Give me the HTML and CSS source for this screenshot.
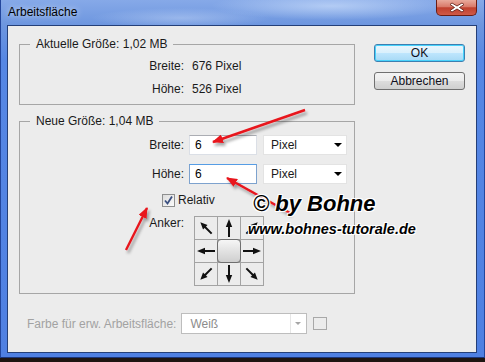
FILE: index.html
```html
<!DOCTYPE html>
<html>
<head>
    <title>Arbeitsfläche</title>
    <link rel="stylesheet" href="styles.css">
</head>
<body>
    <div class="window">
        <div class="titlebar">
            <span class="title">Arbeitsfläche</span>
            <div class="close-button">
                <svg width="16" height="11" viewBox="0 0 16 11">
                    <path d="M3 1 L8 4 L13 1 L15 2.5 L10.5 5.5 L15 8.5 L13 10 L8 7 L3 10 L1 8.5 L5.5 5.5 L1 2.5 Z" fill="#fff" stroke="#5a1810" stroke-width="0.8"/>
                </svg>
            </div>
        </div>

        <div class="client">
            <div class="main-column">
                <fieldset class="group group-current">
                    <legend>Aktuelle Größe: 1,02 MB</legend>
                    <div class="info-grid">
                        <span class="label">Breite:</span><span>676 Pixel</span>
                        <span class="label">Höhe:</span><span>526 Pixel</span>
                    </div>
                </fieldset>

                <fieldset class="group group-new">
                    <legend>Neue Größe: 1,04 MB</legend>
                    <div class="form-grid">
                        <label class="label" for="newWidth">Breite:</label>
                        <div class="field-row">
                            <input type="text" id="newWidth" class="text-input" value="6">
                            <div class="select">Pixel<span class="caret"></span></div>
                        </div>

                        <label class="label" for="newHeight">Höhe:</label>
                        <div class="field-row">
                            <input type="text" id="newHeight" class="text-input text-input-focus" value="6">
                            <div class="select">Pixel<span class="caret"></span></div>
                        </div>

                        <div class="check-row">
                            <span class="checkbox">
                                <svg width="11" height="11" viewBox="0 0 11 11">
                                    <path d="M2 5.5 L4.5 8.5 L9 1.5" fill="none" stroke="#3a4f80" stroke-width="1.8"/>
                                </svg>
                            </span>
                            <span>Relativ</span>
                        </div>

                        <span class="label anchor-label">Anker:</span>
                        <div class="anchor-grid">
                            <div class="anchor-cell">
                                <svg viewBox="0 0 22 22"><path d="M11 3 L14.2 10 L12 10 L12 19 L10 19 L10 10 L7.8 10 Z" transform="rotate(-45 11 11)"/></svg>
                            </div>
                            <div class="anchor-cell">
                                <svg viewBox="0 0 22 22"><path d="M11 2 L14.2 10 L12 10 L12 20 L10 20 L10 10 L7.8 10 Z"/></svg>
                            </div>
                            <div class="anchor-cell">
                                <svg viewBox="0 0 22 22"><path d="M11 3 L14.2 10 L12 10 L12 19 L10 19 L10 10 L7.8 10 Z" transform="rotate(45 11 11)"/></svg>
                            </div>
                            <div class="anchor-cell">
                                <svg viewBox="0 0 22 22"><path d="M11 2 L14.2 10 L12 10 L12 20 L10 20 L10 10 L7.8 10 Z" transform="rotate(-90 11 11)"/></svg>
                            </div>
                            <div class="anchor-cell">
                                <div class="anchor-center"></div>
                            </div>
                            <div class="anchor-cell">
                                <svg viewBox="0 0 22 22"><path d="M11 2 L14.2 10 L12 10 L12 20 L10 20 L10 10 L7.8 10 Z" transform="rotate(90 11 11)"/></svg>
                            </div>
                            <div class="anchor-cell">
                                <svg viewBox="0 0 22 22"><path d="M11 3 L14.2 10 L12 10 L12 19 L10 19 L10 10 L7.8 10 Z" transform="rotate(-135 11 11)"/></svg>
                            </div>
                            <div class="anchor-cell">
                                <svg viewBox="0 0 22 22"><path d="M11 2 L14.2 10 L12 10 L12 20 L10 20 L10 10 L7.8 10 Z" transform="rotate(180 11 11)"/></svg>
                            </div>
                            <div class="anchor-cell">
                                <svg viewBox="0 0 22 22"><path d="M11 3 L14.2 10 L12 10 L12 19 L10 19 L10 10 L7.8 10 Z" transform="rotate(135 11 11)"/></svg>
                            </div>
                        </div>
                    </div>
                </fieldset>

                <div class="color-row">
                    <span class="disabled-label">Farbe für erw. Arbeitsfläche:</span>
                    <div class="select select-disabled">
                        <span>Weiß</span>
                        <span class="select-button"><span class="caret"></span></span>
                    </div>
                    <span class="color-swatch"></span>
                </div>
            </div>

            <div class="button-column">
                <button class="button button-default">OK</button>
                <button class="button">Abbrechen</button>
            </div>
        </div>

        <!-- tutorial annotations drawn over the dialog -->
        <svg class="annotations" width="485" height="362">
            <defs>
                <marker id="head" markerWidth="11" markerHeight="9" refX="10" refY="4.5" orient="auto" markerUnits="userSpaceOnUse">
                    <path d="M0 0 L11 4.5 L0 9 Z" fill="#e8141c"/>
                </marker>
                <filter id="shadow" x="-20%" y="-20%" width="140%" height="140%">
                    <feDropShadow dx="2" dy="3" stdDeviation="1.6" flood-color="#000" flood-opacity="0.35"/>
                </filter>
            </defs>
            <g filter="url(#shadow)" stroke="#e8141c" stroke-width="2.4" marker-end="url(#head)">
                <line x1="305" y1="110" x2="213" y2="142"/>
                <line x1="290" y1="213" x2="227" y2="178"/>
                <line x1="126" y1="250" x2="147" y2="208"/>
            </g>
        </svg>
        <div class="watermark watermark-name">© by Bohne</div>
        <div class="watermark watermark-url">www.bohnes-tutorale.de</div>
    </div>
</body>
</html>
```

FILE: styles.css
```css
body {
    margin: 0;
    width: 485px;
    height: 362px;
    overflow: hidden;
    background-color: #1e1511;
    font-family: 'Liberation Sans', Arial, sans-serif;
    font-size: 12px;
    color: #1a1a1a;
}
.window {
    position: relative;
    display: flex;
    flex-direction: column;
    box-sizing: border-box;
    width: 485px;
    height: 358px;
    padding: 0 7px 4px 6px;
    border-left: 1px solid #23469c;
    border-right: 1px solid #23469c;
    border-bottom: 1px solid #1b3578;
    background:
        radial-gradient(ellipse 120px 14px at 330px 6px, rgba(200, 220, 250, 0.7), transparent),
        radial-gradient(ellipse 90px 10px at 180px 18px, rgba(190, 210, 245, 0.5), transparent),
        linear-gradient(180deg, #86a9e8 0, #6d96df 25px, #5687e4 60px, #4f80e2 100%);
}
.titlebar {
    display: flex;
    justify-content: space-between;
    align-items: flex-start;
    height: 25px;
    padding-left: 1px;
}
.title {
    margin-top: 5px;
    line-height: 14px;
    color: #000;
    text-shadow: 0 0 6px rgba(255, 255, 255, 0.8);
}
.close-button {
    display: flex;
    align-items: center;
    justify-content: center;
    box-sizing: border-box;
    width: 41px;
    height: 16px;
    border: 1px solid #6b1d14;
    border-top: none;
    border-radius: 0 0 5px 5px;
    background: linear-gradient(180deg, #e9aa9c 0%, #d97a6a 45%, #c0402e 52%, #cf5a48 100%);
}
.client {
    flex: 1;
    display: flex;
    padding: 11px 11px 0 11px;
    border: 1px solid #243f78;
    background-color: #ececec;
}
.main-column {
    width: 336px;
}
.group {
    margin: 0;
    padding: 0;
    min-width: 0;
    border: 1px solid #a6a6a6;
}
.group legend {
    margin-left: 10px;
    padding: 0 6px;
    line-height: 15px;
}
.group-new {
    margin-top: 9px;
}
.info-grid {
    display: grid;
    grid-template-columns: 164px auto;
    column-gap: 8px;
    padding: 3px 0;
    line-height: 23px;
}
.label {
    text-align: right;
}
.form-grid {
    display: grid;
    grid-template-columns: 164px auto;
    column-gap: 5px;
    row-gap: 9px;
    padding: 6px 0 7px;
    line-height: 20px;
}
.field-row {
    display: flex;
    gap: 6px;
}
.text-input {
    box-sizing: border-box;
    width: 68px;
    height: 20px;
    margin: 0;
    padding: 0 5px;
    border: 1px solid #dbdfe6;
    border-top-color: #abadb3;
    font-family: inherit;
    font-size: 12px;
    color: #000;
    background-color: white;
    outline: none;
}
.text-input-focus {
    border-color: #7da2ce;
    border-top-color: #569de5;
}
.select {
    display: flex;
    justify-content: space-between;
    align-items: center;
    box-sizing: border-box;
    width: 84px;
    height: 20px;
    padding: 0 3px 0 7px;
    border: 1px solid #e3e3e3;
    background-color: white;
}
.caret {
    width: 0;
    height: 0;
    margin-right: 1px;
    border-left: 4px solid transparent;
    border-right: 4px solid transparent;
    border-top: 4px solid #000;
}
.check-row {
    grid-column: 1 / -1;
    display: flex;
    align-items: center;
    gap: 3px;
    height: 14px;
    padding-left: 142px;
    line-height: 14px;
}
.checkbox {
    display: flex;
    align-items: center;
    justify-content: center;
    box-sizing: border-box;
    width: 13px;
    height: 13px;
    border: 1px solid #8e8f8f;
    background: linear-gradient(135deg, #dcdcdc, #fbfbfb);
}
.anchor-label {
    align-self: start;
    line-height: 14px;
}
.anchor-grid {
    display: grid;
    grid-template-columns: repeat(3, 22px);
    grid-template-rows: repeat(3, 22px);
    gap: 1px;
    width: max-content;
    margin-left: 5px;
    border: 1px solid #a3a3a3;
    background-color: #a3a3a3;
}
.anchor-cell {
    display: flex;
    background-color: #ececec;
}
.anchor-cell svg {
    width: 22px;
    height: 22px;
    fill: #111;
}
.anchor-center {
    flex: 1;
    margin: -1px;
    border: 1px solid #6f6f6f;
    border-radius: 4px;
    background: linear-gradient(180deg, #f6f6f6 0%, #e2e2e2 50%, #cfcfcf 100%);
}
.color-row {
    display: flex;
    align-items: center;
    height: 21px;
    margin-top: 19px;
    padding-left: 8px;
}
.disabled-label {
    margin-right: 5px;
    color: #a2a2a2;
}
.select-disabled {
    width: 126px;
    height: 21px;
    padding: 0 0 0 8px;
    border-color: #bdbdbd;
    color: #8c8c8c;
}
.select-button {
    display: flex;
    align-items: center;
    justify-content: center;
    width: 15px;
    height: 19px;
    border-left: 1px solid #e6e6e6;
}
.select-button .caret {
    border-left-width: 3px;
    border-right-width: 3px;
    border-top: 3px solid #a6a6a6;
}
.color-swatch {
    box-sizing: border-box;
    width: 14px;
    height: 13px;
    margin-left: 6px;
    border: 1px solid #a8a8a8;
}
.button-column {
    display: flex;
    flex-direction: column;
    gap: 10px;
    margin: 7px 0 0 19px;
}
.button {
    box-sizing: border-box;
    width: 91px;
    height: 18px;
    padding: 0;
    border: 1px solid #707070;
    border-radius: 3px;
    font-family: inherit;
    font-size: 12px;
    color: #101020;
    background: linear-gradient(180deg, #f3f3f3 0%, #ebebeb 50%, #dddddd 51%, #cfcfcf 100%);
}
.button-default {
    border-color: #3c7fb1;
    background: linear-gradient(180deg, #eaf6fd 0%, #d9f0fc 50%, #bee6fd 51%, #a7d9f5 100%);
    box-shadow: inset 0 0 0 1px #48d2fb;
}
.annotations {
    position: absolute;
    top: 0;
    left: -1px;
    pointer-events: none;
}
.watermark {
    position: absolute;
    font-weight: bold;
    font-style: italic;
    color: #000;
    white-space: nowrap;
    text-shadow: 1px 1px 0 #fff, -1px -1px 0 #fff, 1px -1px 0 #fff, -1px 1px 0 #fff;
}
.watermark-name {
    top: 193px;
    left: 252px;
    font-size: 22px;
    line-height: 22px;
}
.watermark-url {
    top: 222px;
    left: 247px;
    font-size: 14.5px;
    line-height: 15px;
}
```
